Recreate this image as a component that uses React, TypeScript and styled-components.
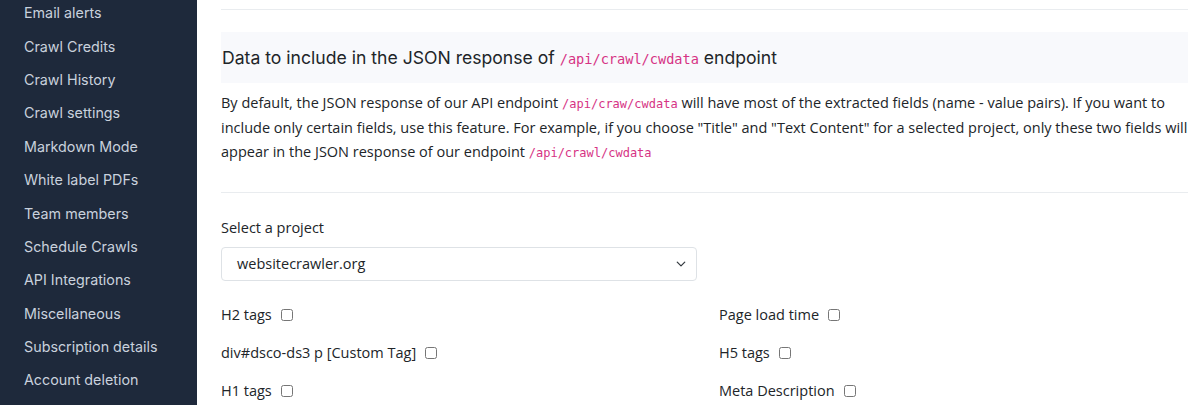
import React from "react";
import styled, { createGlobalStyle } from "styled-components";

const Global = createGlobalStyle`
  html, body { margin: 0; padding: 0; background: #fff; }
  body { font-family: "Open Sans", "Noto Sans", sans-serif; }
  * { box-sizing: border-box; }
`;

const Page = styled.div`
  display: flex;
  width: 1200px;
  height: 405px;
  overflow: hidden;
`;

const Sidebar = styled.nav`
  width: 197px;
  flex: none;
  background: #1e293b;
  overflow: hidden;
`;

const NavList = styled.ul`
  list-style: none;
  margin: -4px 0 0;
  padding: 0;
  display: flex;
  flex-direction: column;
`;

const NavItem = styled.li`
  height: 33.4px;
  display: flex;
  align-items: center;
  padding-left: 24px;
  font-family: "Inter", sans-serif;
  font-weight: 400;
  font-size: 14.3px;
  color: #c9d1dd;
  white-space: nowrap;
`;

const Main = styled.main`
  flex: 1;
  padding: 9px 12px 0 24px;
  color: #212529;
  min-width: 0;
`;

const Rule = styled.hr<{ $mt?: number }>`
  margin: ${(p) => p.$mt ?? 0}px 0 0;
  border: 0;
  border-top: 1px solid #e9ecef;
`;

const HeadBox = styled.div`
  margin-top: 22px;
  height: 51px;
  background: #f8f9fc;
  display: flex;
  align-items: center;
  padding-left: 1px;
`;

const Heading = styled.h2`
  margin: 0;
  font-family: "Inter", sans-serif;
  font-weight: 400;
  font-size: 17.6px;
  color: #212529;
`;

const Code = styled.code<{ $size: number }>`
  font-family: "DejaVu Sans Mono", "Liberation Mono", monospace;
  color: #d63384;
  font-size: ${(p) => p.$size}px;
  line-height: 1;
`;

const Para = styled.p`
  margin: 8px 0 0;
  font-size: 14.5px;
  line-height: 24.5px;
`;

const Label = styled.div`
  margin-top: 23px;
  font-size: 14.5px;
  line-height: 24px;
`;

const Select = styled.div`
  margin-top: 7px;
  width: 476px;
  height: 34px;
  border: 1px solid #dee2e6;
  border-radius: 4px;
  display: flex;
  align-items: center;
  justify-content: space-between;
  padding: 0 10px 0 15px;
  font-size: 14.5px;
  color: #212529;
`;

const Grid = styled.div`
  margin-top: 15px;
  display: grid;
  grid-template-columns: 498px 1fr;
  grid-auto-rows: 38px;
`;

const Field = styled.label`
  display: flex;
  align-items: center;
  font-size: 14.5px;
  color: #212529;
  white-space: nowrap;
`;

const Box = styled.input`
  margin: 0 0 0 9px;
  width: 12px;
  height: 12px;
`;

const nav = [
  "Email alerts",
  "Crawl Credits",
  "Crawl History",
  "Crawl settings",
  "Markdown Mode",
  "White label PDFs",
  "Team members",
  "Schedule Crawls",
  "API Integrations",
  "Miscellaneous",
  "Subscription details",
  "Account deletion",
];

const fields = [
  "H2 tags",
  "Page load time",
  "div#dsco-ds3 p [Custom Tag]",
  "H5 tags",
  "H1 tags",
  "Meta Description",
];

export default function App() {
  return (
    <>
      <Global />
      <Page>
        <Sidebar>
          <NavList>
            {nav.map((n) => (
              <NavItem key={n}>{n}</NavItem>
            ))}
          </NavList>
        </Sidebar>
        <Main>
          <Rule />
          <HeadBox>
            <Heading>
              Data to include in the JSON response of <Code $size={13.6}>/api/crawl/cwdata</Code> endpoint
            </Heading>
          </HeadBox>
          <Para>
            By default, the JSON response of our API endpoint <Code $size={12}>/api/craw/cwdata</Code> will have most
            of the extracted fields (name - value pairs). If you want to include only certain fields, use this
            feature. For example, if you choose "Title" and "Text Content" for a selected project, only these two
            fields will appear in the JSON response of our endpoint <Code $size={12}>/api/crawl/cwdata</Code>
          </Para>
          <Rule $mt={27} />
          <Label>Select a project</Label>
          <Select>
            <span>websitecrawler.org</span>
            <svg width="10" height="10" viewBox="0 0 16 16">
              <path d="M2 5l6 6 6-6" fill="none" stroke="#343a40" strokeWidth="2" strokeLinecap="round" strokeLinejoin="round" />
            </svg>
          </Select>
          <Grid>
            {fields.map((f) => (
              <Field key={f}>
                {f}
                <Box type="checkbox" />
              </Field>
            ))}
          </Grid>
        </Main>
      </Page>
    </>
  );
}
